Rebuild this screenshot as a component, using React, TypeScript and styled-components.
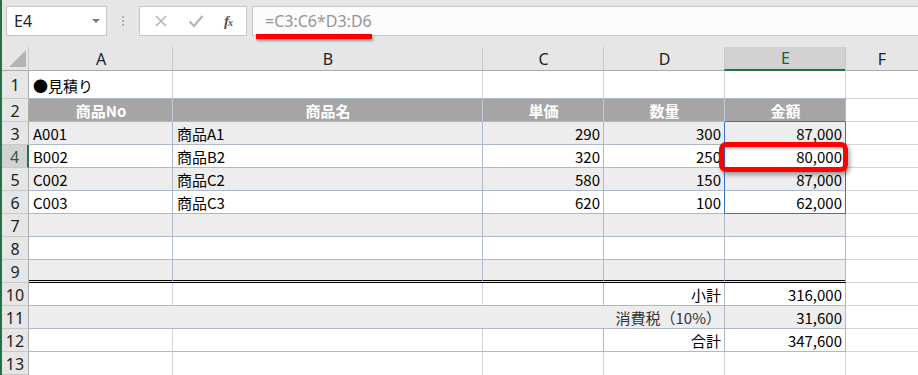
import styled, { createGlobalStyle } from 'styled-components';

const GlobalStyle = createGlobalStyle`
	html, body {
		margin: 0;
		padding: 0;
		background: #ffffff;
	}
	body {
		font-family: 'Noto Sans CJK JP', 'Noto Sans', sans-serif;
	}
`;

const GREEN = '#217346';
const TABLE_LINE = '#adb9cb';
const GRID_LINE = '#d4d4d4';
const HEAD_LINE = '#c4cad6';
const STRIPE = '#ededed';
const SELECT_BLUE = '#3a6fc8';

const Window = styled.div`
	width: 918px;
	height: 375px;
	box-sizing: border-box;
	border-left: 2px solid ${GREEN};
	background: #e6e6e6;
	overflow: hidden;
	display: flex;
	flex-direction: column;
`;

/* ---------- formula bar ---------- */

const FormulaBar = styled.div`
	height: 47px;
	flex: none;
	display: flex;
	align-items: flex-start;
	padding: 6px 0 0 4px;
	box-sizing: border-box;
`;

const NameBox = styled.div`
	width: 101px;
	height: 30px;
	box-sizing: border-box;
	background: #ffffff;
	border: 1px solid #c6c6c6;
	display: flex;
	align-items: center;
	justify-content: space-between;
	padding: 0 6px 0 7px;
	font-family: 'Noto Sans', sans-serif;
	font-size: 16px;
	color: #222;
`;

const DropArrow = styled.span`
	width: 0;
	height: 0;
	border-left: 4px solid transparent;
	border-right: 4px solid transparent;
	border-top: 4px solid #7a7a7a;
`;

const Grip = styled.div`
	width: 32px;
	height: 30px;
	display: flex;
	flex-direction: column;
	align-items: center;
	justify-content: center;
	gap: 2px;

	span {
		width: 2px;
		height: 2px;
		background: #b0b0b0;
	}
`;

const FuncBox = styled.div`
	width: 108px;
	height: 30px;
	box-sizing: border-box;
	background: #ffffff;
	border: 1px solid #c6c6c6;
	display: flex;
	align-items: center;
	justify-content: space-around;
	padding: 0 4px;
	margin-right: 5px;
`;

const FxLabel = styled.span`
	font-family: 'Liberation Serif', serif;
	font-style: italic;
	font-weight: bold;
	font-size: 15px;
	color: #555;
	letter-spacing: -1px;

	small {
		font-size: 10px;
	}
`;

const FormulaInput = styled.div`
	flex: 1;
	height: 30px;
	box-sizing: border-box;
	position: relative;
	background: #fcfcfc;
	border: 1px solid #c6c6c6;
	border-right: none;
	display: flex;
	align-items: center;
	padding-left: 12px;
	font-family: 'Noto Sans', sans-serif;
	font-size: 16px;
	color: #959595;
`;

const RedUnderline = styled.div`
	position: absolute;
	left: 3px;
	top: 27px;
	width: 116px;
	height: 5px;
	background: #ff0000;
	box-shadow: 1px 2px 3px rgba(0, 0, 0, 0.35);
`;

/* ---------- sheet ---------- */

const Sheet = styled.div`
	flex: 1;
	display: grid;
	grid-template-columns: 27px 144px 310px 121px 121px 121px 1fr;
	grid-template-rows: 24px 28px repeat(12, 23px);
	background: #ffffff;
`;

const Corner = styled.div`
	background: #e6e6e6;
	border-right: 1px solid #ababab;
	border-bottom: 1px solid #ababab;
	display: flex;
	align-items: flex-end;
	justify-content: flex-end;
	padding: 0 2px 3px 0;
`;

const ColHead = styled.div<{ $active?: boolean }>`
	background: ${(p) => (p.$active ? '#d2d2d2' : '#e6e6e6')};
	border-left: 1px solid #c8c8c8;
	border-bottom: ${(p) => (p.$active ? `2px solid ${GREEN}` : '1px solid #ababab')};
	display: flex;
	align-items: center;
	justify-content: center;
	font-family: 'Noto Sans', sans-serif;
	font-size: 16px;
	color: ${(p) => (p.$active ? '#1d5e3a' : '#222')};
	margin-left: -1px;
`;

const RowHead = styled.div<{ $active?: boolean }>`
	background: ${(p) => (p.$active ? '#d2d2d2' : '#e6e6e6')};
	border-right: ${(p) => (p.$active ? `2px solid ${GREEN}` : '1px solid #ababab')};
	border-bottom: 1px solid #c8c8c8;
	display: flex;
	align-items: center;
	justify-content: center;
	font-family: 'Noto Sans', sans-serif;
	font-size: 16px;
	color: ${(p) => (p.$active ? '#2b5a3f' : '#222')};
	padding-top: 1px;
`;

type Align = 'left' | 'center' | 'right';

const Cell = styled.div<{
	$bg: string;
	$align: Align;
	$bold?: boolean;
	$color: string;
	$right: string;
	$bottom: string;
	$span: number;
	$raised?: boolean;
}>`
	position: relative;
	z-index: ${(p) => (p.$raised ? 3 : 'auto')};
	grid-column: span ${(p) => p.$span};
	background: ${(p) => p.$bg};
	border-right: ${(p) => p.$right};
	border-bottom: ${(p) => p.$bottom};
	display: flex;
	align-items: center;
	justify-content: ${(p) =>
		p.$align === 'right' ? 'flex-end' : p.$align === 'center' ? 'center' : 'flex-start'};
	padding: 1px 3px 0 4px;
	font-size: 15px;
	font-weight: ${(p) => (p.$bold ? 700 : 400)};
	color: ${(p) => p.$color};
	white-space: nowrap;
	min-width: 0;
`;

const Callout = styled.div`
	position: absolute;
	left: -6px;
	top: -3px;
	right: -3px;
	bottom: -5px;
	border: 5px solid #ff0000;
	border-radius: 7px;
	box-shadow: 2px 3px 4px rgba(0, 0, 0, 0.35), inset 1px 2px 3px rgba(0, 0, 0, 0.25);
	pointer-events: none;
`;

type CellSpec = {
	text?: string;
	align?: Align;
	bold?: boolean;
	color?: string;
	bg?: string;
	right?: string;
	bottom?: string;
	span?: number;
	callout?: boolean;
};

const line = (c: string) => `1px solid ${c}`;

const items = [
	{ no: 'A001', name: '商品A1', price: '290', qty: '300', amount: '87,000' },
	{ no: 'B002', name: '商品B2', price: '320', qty: '250', amount: '80,000' },
	{ no: 'C002', name: '商品C2', price: '580', qty: '150', amount: '87,000' },
	{ no: 'C003', name: '商品C3', price: '620', qty: '100', amount: '62,000' },
];

const fCell: CellSpec = { right: 'none', bottom: line(GRID_LINE) };

const buildRows = (): CellSpec[][] => {
	const rows: CellSpec[][] = [];

	// row 1: title
	rows.push([
		{ text: '●見積り', right: line(GRID_LINE), bottom: line(TABLE_LINE) },
		{ right: line(GRID_LINE), bottom: line(TABLE_LINE) },
		{ right: line(GRID_LINE), bottom: line(TABLE_LINE) },
		{ right: line(GRID_LINE), bottom: line(TABLE_LINE) },
		{ right: line(GRID_LINE), bottom: line(TABLE_LINE) },
		fCell,
	]);

	// row 2: header
	const heads = ['商品No', '商品名', '単価', '数量', '金額'];
	rows.push([
		...heads.map((h, i) => ({
			text: h,
			align: 'center' as Align,
			bold: true,
			color: '#ffffff',
			bg: '#a5a5a5',
			right: line(i === 4 ? TABLE_LINE : HEAD_LINE),
			bottom: i === 4 ? line(SELECT_BLUE) : line(TABLE_LINE),
		})),
		fCell,
	]);

	// rows 3-6: items
	items.forEach((it, i) => {
		const bg = i % 2 === 0 ? STRIPE : '#ffffff';
		const last = i === items.length - 1;
		rows.push([
			{ text: it.no, bg },
			{ text: it.name, bg },
			{ text: it.price, align: 'right', bg },
			{ text: it.qty, align: 'right', bg, right: line(SELECT_BLUE) },
			{
				text: it.amount,
				align: 'right',
				bg,
				right: line(SELECT_BLUE),
				bottom: last ? line(SELECT_BLUE) : undefined,
				callout: i === 1,
			},
			fCell,
		]);
	});

	// rows 7-9: empty stripes
	[STRIPE, '#ffffff', STRIPE].forEach((bg, i) => {
		const bottom = i === 2 ? '3px double #000000' : undefined;
		rows.push([
			{ bg, bottom },
			{ bg, bottom },
			{ bg, bottom },
			{ bg, bottom },
			{ bg, bottom },
			fCell,
		]);
	});

	// row 10: subtotal
	rows.push([
		{ right: line(GRID_LINE) },
		{ right: line(GRID_LINE) },
		{},
		{ text: '小計', align: 'right' },
		{ text: '316,000', align: 'right' },
		fCell,
	]);

	// row 11: tax (A-D merged)
	rows.push([
		{ text: '消費税（10%）', align: 'right', bg: STRIPE, span: 4, color: '#333' },
		{ text: '31,600', align: 'right', bg: STRIPE },
		fCell,
	]);

	// row 12: total
	rows.push([
		{ right: line(GRID_LINE) },
		{ right: line(GRID_LINE) },
		{},
		{ text: '合計', align: 'right' },
		{ text: '347,600', align: 'right' },
		fCell,
	]);

	// row 13: plain grid
	rows.push([
		{ right: line(GRID_LINE), bottom: 'none' },
		{ right: line(GRID_LINE), bottom: 'none' },
		{ right: line(GRID_LINE), bottom: 'none' },
		{ right: line(GRID_LINE), bottom: 'none' },
		{ right: line(GRID_LINE), bottom: 'none' },
		{ right: 'none', bottom: 'none' },
	]);

	return rows;
};

const CornerTriangle = () => (
	<svg width="17" height="17" viewBox="0 0 17 17">
		<polygon points="17,0 17,17 0,17" fill="#b4b4b4" />
	</svg>
);

const CancelIcon = () => (
	<svg width="14" height="14" viewBox="0 0 14 14">
		<path d="M2 2 L12 12 M12 2 L2 12" stroke="#b3b3b3" strokeWidth="1.6" fill="none" />
	</svg>
);

const EnterIcon = () => (
	<svg width="16" height="14" viewBox="0 0 16 14">
		<path d="M1.5 7.5 L6 12 L14.5 2" stroke="#b3b3b3" strokeWidth="2" fill="none" />
	</svg>
);

const columns = ['A', 'B', 'C', 'D', 'E', 'F'];

export default function App() {
	const rows = buildRows();

	return (
		<>
			<GlobalStyle />
			<Window>
				<FormulaBar>
					<NameBox>
						E4
						<DropArrow />
					</NameBox>
					<Grip>
						<span />
						<span />
						<span />
					</Grip>
					<FuncBox>
						<CancelIcon />
						<EnterIcon />
						<FxLabel>
							f<small>x</small>
						</FxLabel>
					</FuncBox>
					<FormulaInput>
						=C3:C6*D3:D6
						<RedUnderline />
					</FormulaInput>
				</FormulaBar>

				<Sheet>
					<Corner>
						<CornerTriangle />
					</Corner>
					{columns.map((c) => (
						<ColHead key={c} $active={c === 'E'}>
							{c}
						</ColHead>
					))}

					{rows.map((cells, r) => (
						<Row key={r} index={r + 1} cells={cells} />
					))}
				</Sheet>
			</Window>
		</>
	);
}

const Row = ({ index, cells }: { index: number; cells: CellSpec[] }) => (
	<>
		<RowHead $active={index === 4}>{index}</RowHead>
		{cells.map((c, i) => (
			<Cell
				key={i}
				$bg={c.bg ?? '#ffffff'}
				$align={c.align ?? 'left'}
				$bold={c.bold}
				$color={c.color ?? '#000000'}
				$right={c.right ?? line(TABLE_LINE)}
				$bottom={c.bottom ?? line(TABLE_LINE)}
				$span={c.span ?? 1}
				$raised={c.callout}
			>
				{c.text}
				{c.callout && <Callout />}
			</Cell>
		))}
	</>
);
